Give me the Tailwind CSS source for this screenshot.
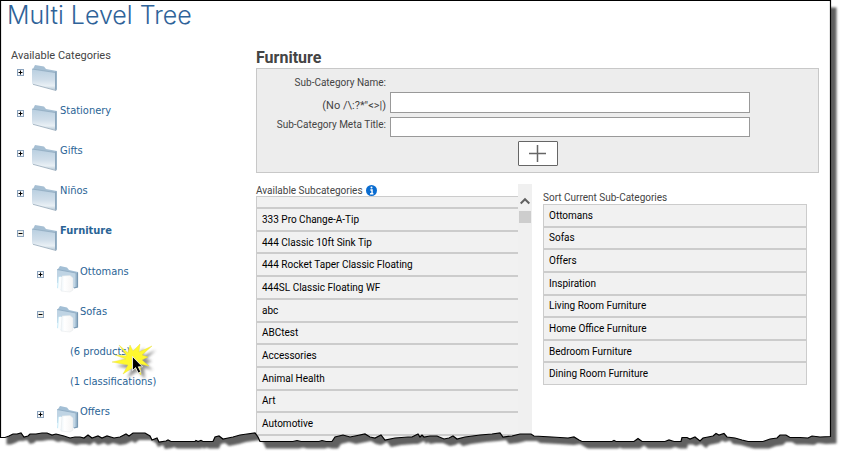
<!DOCTYPE html>
<html lang="en">
<head>
<meta charset="utf-8">
<title>Multi Level Tree</title>
<script src="https://cdn.jsdelivr.net/npm/@tailwindcss/browser@4"></script>
</head>
<body class="bg-white">
<svg class="absolute size-0" aria-hidden="true">
  <defs>
    <linearGradient id="front" x1="0" y1="0" x2="0" y2="1">
      <stop offset="0" stop-color="#b9cfe0"/><stop offset=".5" stop-color="#cfdde9"/><stop offset=".8" stop-color="#e9f0f5"/><stop offset="1" stop-color="#b4c7d5"/>
    </linearGradient>
    <linearGradient id="paper" x1="0" y1="0" x2="1" y2="0">
      <stop offset="0" stop-color="#eef6fa"/><stop offset=".3" stop-color="#ffffff"/><stop offset="1" stop-color="#f4f4f4"/>
    </linearGradient>
  </defs>
  <symbol id="folder" viewBox="0 0 26 28">
    <path d="M3 1L12 2.500L14 5L25 7L25 26L23 25L1 18V5Z" fill="#a6bfd3"/>
    <path d="M0 5L23 8.500L23 26L0 20Z" fill="url(#front)"/>
    <path d="M0 5L23 8.500" stroke="#8ba6bb" stroke-width=".7"/>
    <path d="M23.800 7.500V26.500" stroke="#86a2b8" stroke-width="1.300"/>
    <path d="M1 20.300L24 26.500" stroke="#9fb1bf" stroke-width=".9"/>
  </symbol>
  <symbol id="docs" viewBox="0 0 24 28">
    <path d="M4 1L11 2.500L13 5L22 7L22 22L18 23L2 16V4Z" fill="#a3bfd5"/>
    <path d="M1 4.500L20 8L20 23L1 18Z" fill="#bfd4e4"/>
    <path d="M1 4.500L20 8V22" fill="none" stroke="#86a3bb" stroke-width=".7"/>
    <path d="M21.500 7.500V22L18 23" fill="none" stroke="#7898b2" stroke-width="1.200"/>
    <path d="M2 12L5 11L6 25L1 23Z" fill="#c9ebf8"/>
    <path d="M3 12L13 12L13 26L2 24Z" fill="#fbfdfe"/>
    <path d="M6 11L14 10.500L17 13L17 25L14 27L5 26Z" fill="url(#paper)" stroke="#e2e6e9" stroke-width=".5"/>
  </symbol>
  <symbol id="plus" viewBox="0 0 7 7">
    <rect x=".5" y=".5" width="6" height="6" fill="#f6f7f9" stroke="#8ba3bd"/>
    <path d="M1.500 3.500H5.500M3.500 1.500V5.500" stroke="#000"/>
  </symbol>
  <symbol id="minus" viewBox="0 0 7 7">
    <rect x=".5" y=".5" width="6" height="6" fill="#f2f1ea" stroke="#8ba3bd"/>
    <path d="M1.500 3.500H5.500" stroke="#000"/>
  </symbol>
</svg>

<div class="relative min-h-screen overflow-hidden font-[Roboto,sans-serif] text-[#444]">
  <div class="absolute inset-x-0 top-0 h-[457px]">
    <header class="h-[46px] pl-[7px]">
      <h1 class="font-[Inter,sans-serif] text-[25px] font-light leading-[31px] text-[#2f6399]">Multi Level Tree</h1>
    </header>

    <div class="flex">
      <aside class="w-64 shrink-0 pl-[11px]">
        <h2 class="h-4 text-[11px] leading-5">Available Categories</h2>
        <ul class="font-['DejaVu_Sans_Condensed','DejaVu_Sans',sans-serif] text-[11px] leading-[18px] text-[#2a6496]">
          <li class="flex h-10 items-start pl-[6px]">
            <button class="mt-[7px] size-[7px]" aria-label="Expand"><svg class="size-[7px]"><use href="#plus"/></svg></button>
            <svg class="ml-2 mt-[2px] h-7 w-[26px]"><use href="#folder"/></svg>
          </li>
          <li class="flex h-10 items-start pl-[6px]">
            <button class="mt-2 size-[7px]" aria-label="Expand Stationery"><svg class="size-[7px]"><use href="#plus"/></svg></button>
            <svg class="ml-2 mt-[2px] h-7 w-[26px]"><use href="#folder"/></svg>
            <a href="#" class="ml-[2px]">Stationery</a>
          </li>
          <li class="flex h-10 items-start pl-[6px]">
            <button class="mt-2 size-[7px]" aria-label="Expand Gifts"><svg class="size-[7px]"><use href="#plus"/></svg></button>
            <svg class="ml-2 mt-[2px] h-7 w-[26px]"><use href="#folder"/></svg>
            <a href="#" class="ml-[2px]">Gifts</a>
          </li>
          <li class="flex h-10 items-start pl-[6px]">
            <button class="mt-2 size-[7px]" aria-label="Expand Niños"><svg class="size-[7px]"><use href="#plus"/></svg></button>
            <svg class="ml-2 mt-[2px] h-7 w-[26px]"><use href="#folder"/></svg>
            <a href="#" class="ml-[2px]">Niños</a>
          </li>
          <li>
            <div class="flex h-10 items-start pl-[6px]">
              <button class="mt-2 size-[7px]" aria-label="Collapse Furniture"><svg class="size-[7px]"><use href="#minus"/></svg></button>
              <svg class="ml-2 mt-[2px] h-7 w-[26px]"><use href="#folder"/></svg>
              <a href="#" class="ml-[2px] font-bold">Furniture</a>
            </div>
            <ul class="pl-[26px] pt-px">
              <li class="flex h-10 items-start">
                <button class="mt-2 size-[7px]" aria-label="Expand Ottomans"><svg class="size-[7px]"><use href="#plus"/></svg></button>
                <svg class="ml-3 mt-[2px] h-7 w-6"><use href="#docs"/></svg>
                <a href="#">Ottomans</a>
              </li>
              <li>
                <div class="flex h-10 items-start">
                  <button class="mt-2 size-[7px]" aria-label="Collapse Sofas"><svg class="size-[7px]"><use href="#minus"/></svg></button>
                  <svg class="ml-3 mt-[2px] h-7 w-6"><use href="#docs"/></svg>
                  <a href="#">Sofas</a>
                </div>
                <ul class="pl-[33px]">
                  <li class="h-[30px]"><a href="#">(6 products)</a></li>
                  <li class="h-[30px]"><a href="#">(1 classifications)</a></li>
                </ul>
              </li>
              <li class="flex h-10 items-start">
                <button class="mt-2 size-[7px]" aria-label="Expand Offers"><svg class="size-[7px]"><use href="#plus"/></svg></button>
                <svg class="ml-3 mt-[2px] h-7 w-6"><use href="#docs"/></svg>
                <a href="#">Offers</a>
              </li>
            </ul>
          </li>
        </ul>
      </aside>

      <main class="min-w-0 flex-1 pr-[27px]">
        <h2 class="h-[22px] text-base font-bold leading-6">Furniture</h2>
        <form class="border border-[#c8c8c8] bg-[#ededed] pb-[6px] pt-[5px] text-[10px]">
          <div class="grid grid-cols-[129px_360px] gap-x-1">
            <label for="name" class="text-right">
              <span class="block h-[18px] leading-[18px]">Sub-Category Name:</span>
              <span class="block h-[25px] pt-1 text-[11px] leading-5">(No /\:?*"&lt;&gt;|)</span>
            </label>
            <input id="name" type="text" class="mt-[18px] h-[21px] w-full border border-[#999] bg-white px-1">
            <label for="meta" class="h-[24px] text-right leading-4">Sub-Category Meta Title:</label>
            <input id="meta" type="text" class="h-5 w-full border border-[#999] bg-white px-1">
          </div>
          <button type="button" aria-label="Add" class="mx-auto flex h-[25px] w-10 items-center justify-center rounded-[1px] border border-[#666] bg-white">
            <svg class="size-[17px]" viewBox="0 0 17 17"><path d="M0 8.500H17M8.500 0V17" stroke="#666" stroke-width="1.500"/></svg>
          </button>
        </form>

        <div class="mt-[11px] flex text-[10px]">
          <section class="flex w-[276px]">
            <div class="min-w-0 flex-1">
              <h3 class="flex h-3 items-center gap-[3px]">Available Subcategories
                <svg class="size-[11px]" viewBox="0 0 10 10"><circle cx="5" cy="5" r="5" fill="#0a6cd0"/><path d="M4 4.500H5.500V8M3.700 8H6.700" fill="none" stroke="#fff" stroke-width="1.300"/><circle cx="5" cy="2.300" r=".9" fill="#fff"/></svg>
              </h3>
              <div class="h-3 border border-r-0 border-[#ccc] bg-[#f1f1f1]"></div>
              <ul class="grid h-[227px] auto-rows-fr text-black">
                <li class="flex items-center border border-r-0 border-[#ccc] bg-[#f1f1f1] pl-[5px]">333 Pro Change-A-Tip</li>
                <li class="flex items-center border border-r-0 border-[#ccc] bg-[#f1f1f1] pl-[5px]">444 Classic 10ft Sink Tip</li>
                <li class="flex items-center border border-r-0 border-[#ccc] bg-[#f1f1f1] pl-[5px]">444 Rocket Taper Classic Floating</li>
                <li class="flex items-center border border-r-0 border-[#ccc] bg-[#f1f1f1] pl-[5px]">444SL Classic Floating WF</li>
                <li class="flex items-center border border-r-0 border-[#ccc] bg-[#f1f1f1] pl-[5px]">abc</li>
                <li class="flex items-center border border-r-0 border-[#ccc] bg-[#f1f1f1] pl-[5px]">ABCtest</li>
                <li class="flex items-center border border-r-0 border-[#ccc] bg-[#f1f1f1] pl-[5px]">Accessories</li>
                <li class="flex items-center border border-r-0 border-[#ccc] bg-[#f1f1f1] pl-[5px]">Animal Health</li>
                <li class="flex items-center border border-r-0 border-[#ccc] bg-[#f1f1f1] pl-[5px]">Art</li>
                <li class="flex items-center border border-r-0 border-[#ccc] bg-[#f1f1f1] pl-[5px]">Automotive</li>
              </ul>
              <div class="h-4 border border-r-0 border-[#ccc] bg-[#f1f1f1]"></div>
            </div>
            <div class="flex w-[14px] flex-col items-center bg-[#f0f0f0] pt-[13px]">
              <svg class="h-2 w-[10px]" viewBox="0 0 10 8"><path d="M.7 6.500L5 2.200L9.300 6.500" fill="none" stroke="#606060" stroke-width="2"/></svg>
              <div class="mt-[6px] h-3 w-3 bg-[#cdcdcd]"></div>
            </div>
          </section>

          <section class="ml-[11px] mt-2 w-[264px]">
            <h3 class="h-3 leading-3">Sort Current Sub-Categories</h3>
            <ul class="grid h-[181px] auto-rows-fr text-black">
              <li class="flex items-center border border-[#ccc] bg-[#f1f1f1] pl-[5px]">Ottomans</li>
              <li class="flex items-center border border-[#ccc] bg-[#f1f1f1] pl-[5px]">Sofas</li>
              <li class="flex items-center border border-[#ccc] bg-[#f1f1f1] pl-[5px]">Offers</li>
              <li class="flex items-center border border-[#ccc] bg-[#f1f1f1] pl-[5px]">Inspiration</li>
              <li class="flex items-center border border-[#ccc] bg-[#f1f1f1] pl-[5px]">Living Room Furniture</li>
              <li class="flex items-center border border-[#ccc] bg-[#f1f1f1] pl-[5px]">Home Office Furniture</li>
              <li class="flex items-center border border-[#ccc] bg-[#f1f1f1] pl-[5px]">Bedroom Furniture</li>
              <li class="flex items-center border border-[#ccc] bg-[#f1f1f1] pl-[5px]">Dining Room Furniture</li>
            </ul>
          </section>
        </div>
      </main>
    </div>

    <!-- click marker -->
    <svg class="pointer-events-none absolute left-[108px] top-[340px] h-[44px] w-[54px]" viewBox="108 340 54 44" aria-hidden="true">
      <defs><filter id="soft" x="-30%" y="-30%" width="160%" height="160%"><feGaussianBlur stdDeviation="1.800"/></filter></defs>
      <path transform="translate(4 4)" filter="url(#soft)" fill="#555" opacity=".65" d="M119 345L128 353L130 345L133 351L140 344L139 352L152 346L142 355L148 357L142 360L149 366L140 364L141 375L134 367L123 374L128 365L112 362L126 359L115 355L127 356Z"/>
      <path fill="#fff82e" stroke="#e6dc3c" stroke-width=".4" d="M119 345L128 353L130 345L133 351L140 344L139 352L152 346L142 355L148 357L142 360L149 366L140 364L141 375L134 367L123 374L128 365L112 362L126 359L115 355L127 356Z"/>
      <path fill="#000" stroke="#fff" stroke-width=".8" d="M132.500 356.500V370.500L135.600 367.600L138.200 373L140.800 371.800L138.300 366.800H142.500Z"/>
    </svg>

    <!-- torn page edge with its shadow -->
    <svg class="pointer-events-none absolute inset-0 size-full" viewBox="0 0 846 457" preserveAspectRatio="none" aria-hidden="true">
      <defs>
        <path id="sheet" d="M.5 .5V437.500H5L9 436L13 434H17L21 433L24 437L28 436L30 434H36L42 433H47L52 435L56 434L64 436L70 438L75 437H80L84 438L88 435L92 438L98 436L102 438L107 436L114 438L120 437L126 434L129 436L133 433H145L150 436L152 440L157 438L159 442L166 441L168 440L171 441.500H195L196 440.500L198 441.500L201 440.500L203 441.500H213L215 437L219 436L223 439L228 438L233 437L240 435L247 434L255 433L258 437L260 441.500H293L297 440.500L301 441.500H319L322 440.500L326 441.500H332L335 437L343 435L350 437L355 436L365 434L370 437L375 438L381 435L385 440L395 438L408 437L412 437L418 434L420 437L422 435L424 437L430 436H437L444 439L449 438L453 436L457 439L465 437L480 435L492 434L500 433L503 437L512 436L520 434H531L534 436L552 437L568 438L574 437L579 440L582 441.500H612L614 440.500L616 441.500H634L638 438.500L642 441.500H665L669 440L674 441.500H681L682 437.500H687L690 439L695 437L700 441L703 438L708 437L713 436L716 433.500L719 435L724 433.500L727 437L735 438L742 440L748 441.500H763L770 439L777 438L780 435L786 435L790 437.500H800L808 438L812 436L820 437L830.500 436.500V.5Z"/>
        <clipPath id="outside"><path clip-rule="evenodd" d="M-10 -10H860V470H-10ZM.5 .5V437.500H5L9 436L13 434H17L21 433L24 437L28 436L30 434H36L42 433H47L52 435L56 434L64 436L70 438L75 437H80L84 438L88 435L92 438L98 436L102 438L107 436L114 438L120 437L126 434L129 436L133 433H145L150 436L152 440L157 438L159 442L166 441L168 440L171 441.500H195L196 440.500L198 441.500L201 440.500L203 441.500H213L215 437L219 436L223 439L228 438L233 437L240 435L247 434L255 433L258 437L260 441.500H293L297 440.500L301 441.500H319L322 440.500L326 441.500H332L335 437L343 435L350 437L355 436L365 434L370 437L375 438L381 435L385 440L395 438L408 437L412 437L418 434L420 437L422 435L424 437L430 436H437L444 439L449 438L453 436L457 439L465 437L480 435L492 434L500 433L503 437L512 436L520 434H531L534 436L552 437L568 438L574 437L579 440L582 441.500H612L614 440.500L616 441.500H634L638 438.500L642 441.500H665L669 440L674 441.500H681L682 437.500H687L690 439L695 437L700 441L703 438L708 437L713 436L716 433.500L719 435L724 433.500L727 437L735 438L742 440L748 441.500H763L770 439L777 438L780 435L786 435L790 437.500H800L808 438L812 436L820 437L830.500 436.500V.5Z"/></clipPath>
        <filter id="shade" x="-5%" y="-5%" width="110%" height="110%"><feGaussianBlur stdDeviation="1.200"/></filter>
      </defs>
      <g clip-path="url(#outside)">
        <rect x="-10" y="-10" width="870" height="480" fill="#fff"/>
        <use href="#sheet" transform="translate(6 7)" fill="#606060" filter="url(#shade)"/>
      </g>
      <use href="#sheet" fill="none" stroke="#000" stroke-width="1.200"/>
    </svg>
  </div>
</div>
</body>
</html>
